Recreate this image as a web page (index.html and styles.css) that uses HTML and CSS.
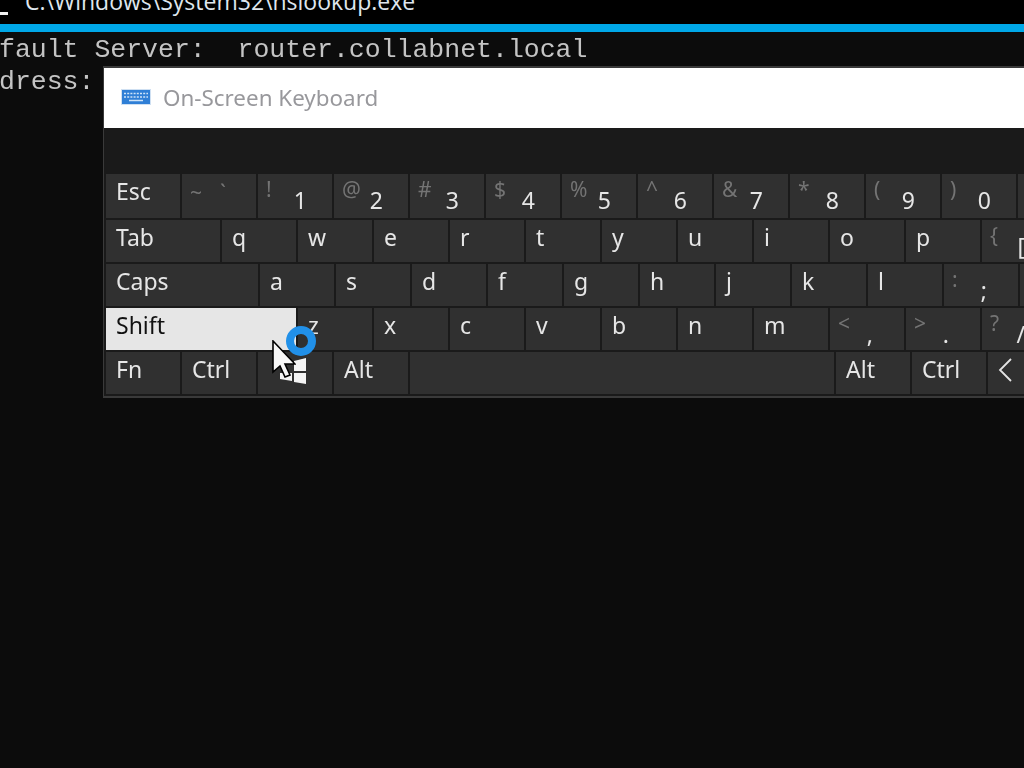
FILE: index.html
```html
<!DOCTYPE html>
<html lang="en">
<head>
<meta charset="utf-8">
<title>On-Screen Keyboard</title>
<link rel="stylesheet" href="styles.css">
</head>
<body>
<div class="console">
  <div class="titlebar">
    <span class="sysicon"></span>
    <span class="path">C:\Windows\System32\nslookup.exe</span>
  </div>
  <div class="accent"></div>
  <pre class="output">fault Server:  router.collabnet.local
dress:</pre>
</div>

<section class="osk">
  <header class="osk-title">
    <svg class="osk-icon" viewBox="0 0 30 16" aria-hidden="true">
      <rect width="30" height="16" fill="#cfe0f2"/>
      <rect x="1" y="1" width="28" height="14" fill="#2f7fd6"/>
      <path d="M3 4.5h24M3 8h24" stroke="#cfe4f8" stroke-width="1.5" stroke-dasharray="2 1.2"/>
      <path d="M8 11.5h14" stroke="#cfe4f8" stroke-width="1.5"/>
    </svg>
    <span>On-Screen Keyboard</span>
  </header>
  <div class="keys">
    <div class="row row-first">
      <div class="key">Esc</div>
      <div class="key dual tilde"><i>~</i><i>`</i></div>
      <div class="key dual"><i>!</i><b>1</b></div>
      <div class="key dual"><i>@</i><b>2</b></div>
      <div class="key dual"><i>#</i><b>3</b></div>
      <div class="key dual"><i>$</i><b>4</b></div>
      <div class="key dual"><i>%</i><b>5</b></div>
      <div class="key dual"><i>^</i><b>6</b></div>
      <div class="key dual"><i>&amp;</i><b>7</b></div>
      <div class="key dual"><i>*</i><b>8</b></div>
      <div class="key dual"><i>(</i><b>9</b></div>
      <div class="key dual"><i>)</i><b>0</b></div>
      <div class="key"></div>
    </div>
    <div class="row">
      <div class="key w-tab">Tab</div>
      <div class="key">q</div><div class="key">w</div><div class="key">e</div><div class="key">r</div><div class="key">t</div>
      <div class="key">y</div><div class="key">u</div><div class="key">i</div><div class="key">o</div><div class="key">p</div>
      <div class="key dual punct"><i>{</i><b>[</b></div>
    </div>
    <div class="row">
      <div class="key w-caps">Caps</div>
      <div class="key">a</div><div class="key">s</div><div class="key">d</div><div class="key">f</div><div class="key">g</div>
      <div class="key">h</div><div class="key">j</div><div class="key">k</div><div class="key">l</div>
      <div class="key dual punct"><i>:</i><b>;</b></div>
      <div class="key"></div>
    </div>
    <div class="row">
      <div class="key w-shift active">Shift</div>
      <div class="key">z</div><div class="key">x</div><div class="key">c</div><div class="key">v</div><div class="key">b</div>
      <div class="key">n</div><div class="key">m</div>
      <div class="key dual punct"><i>&lt;</i><b>,</b></div>
      <div class="key dual punct"><i>&gt;</i><b>.</b></div>
      <div class="key dual punct"><i>?</i><b>/</b></div>
    </div>
    <div class="row">
      <div class="key">Fn</div>
      <div class="key">Ctrl</div>
      <div class="key"></div>
      <div class="key">Alt</div>
      <div class="key w-space"></div>
      <div class="key">Alt</div>
      <div class="key">Ctrl</div>
      <div class="key">
        <svg class="chev" viewBox="0 0 14 24" aria-hidden="true"><path d="M13 1 2 12l11 11" fill="none" stroke="#e4e4e4" stroke-width="1.8"/></svg>
      </div>
    </div>
  </div>
</section>

<svg class="winlogo" viewBox="0 0 26 26" aria-hidden="true">
  <path d="M0 15h12v8L0 21zM14 15h12v11l-12-2zM14 13V3l12-3v13z" fill="#f4f4f4"/>
</svg>
<svg class="busy" viewBox="0 0 30 30" aria-hidden="true">
  <circle cx="15" cy="15" r="11" fill="none" stroke="#2190e8" stroke-width="8"/>
</svg>
<svg class="pointer" viewBox="0 0 24 38" aria-hidden="true">
  <path d="M1 1v31l7-6 5 11 5-2-5-11h10z" fill="#f7f7f7" stroke="#000" stroke-width="1.6"/>
</svg>
</body>
</html>
```
FILE: styles.css
```css
* { box-sizing: border-box; }
html, body { margin: 0; height: 100%; }
body {
  width: 1024px;
  height: 768px;
  overflow: hidden;
  position: relative;
  background: #0c0c0c;
  filter: blur(0.4px);
}
.console { display: flex; flex-direction: column; }
.titlebar {
  height: 24px;
  background: #000;
  display: flex;
  align-items: flex-end;
  overflow: hidden;
}
.sysicon {
  width: 8px;
  height: 3px;
  margin-bottom: 9px;
  background: #f0f0f0;
  flex: none;
}
.path {
  margin-left: 17px;
  margin-bottom: 9px;
  font: 23px/28px "Open Sans", sans-serif;
  color: #dfe6ee;
  white-space: nowrap;
}
.accent { height: 8px; background: #00a8e8; }
.output {
  margin: 0 0 0 -1px;
  padding: 2px 0 0;
  font: 26.5px/32px "Liberation Mono", monospace;
  color: #c4c4c4;
  white-space: pre;
}
.osk {
  position: absolute;
  left: 103px;
  top: 66px;
  width: 1000px;
  height: 332px;
  background: #1a1a1a;
  border: solid #3a3a3a;
  border-width: 2px 0 2px 1px;
}
.osk-title {
  height: 60px;
  background: #fff;
  display: flex;
  align-items: center;
  gap: 12px;
  padding: 0 0 2px 17px;
  font: 22.4px "Noto Sans", sans-serif;
  color: #98989c;
}
.osk-icon { width: 30px; height: 16px; flex: none; }
.keys {
  display: flex;
  flex-direction: column;
  gap: 2px;
  padding: 46px 0 0 2px;
}
.row { display: flex; gap: 2px; height: 42px; }
.row-first { height: 44px; }
.row-first .key { padding-bottom: 10px; }
.key {
  flex: none;
  width: 74px;
  background: #303030;
  color: #e6e6e6;
  font: 23px/1 "Noto Sans", sans-serif;
  padding: 0 0 7px 10px;
  display: flex;
  align-items: center;
}
.w-tab { width: 114px; }
.w-caps { width: 152px; }
.w-shift { width: 190px; }
.w-space { width: 424px; }
.active { background: #e6e6e6; color: #111; }
.row-first .dual,
.dual {
  justify-content: space-between;
  padding: 0 25px 0 8px;
}
.dual i {
  font-style: normal;
  font-size: 21px;
  color: #747474;
  align-self: flex-start;
  margin-top: 5px;
}
.dual b {
  font-weight: 400;
  align-self: flex-end;
  margin-bottom: 6px;
}
.row .punct { padding-right: 31px; }
.punct b { margin-bottom: 4px; }
.row .tilde { padding-right: 30px; }
.tilde i { margin-top: 8px; }
.chev { width: 14px; height: 24px; }
.winlogo { position: absolute; left: 280px; top: 358px; width: 26px; height: 26px; }
.busy { position: absolute; left: 286px; top: 326px; width: 30px; height: 30px; }
.pointer { position: absolute; left: 272px; top: 340px; width: 24px; height: 38px; }
```
